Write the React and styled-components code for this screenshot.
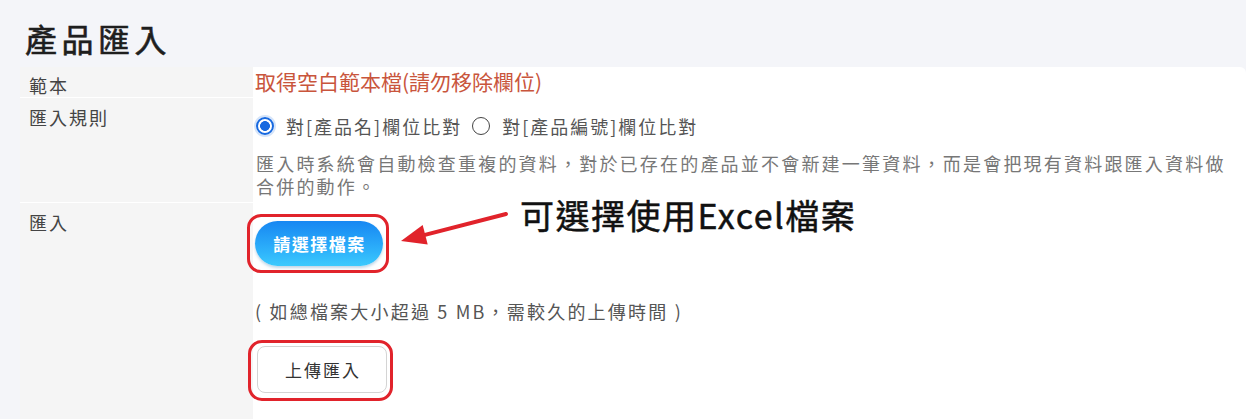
import React from "react";
import styled, { createGlobalStyle } from "styled-components";

const Global = createGlobalStyle`
  html, body { margin: 0; padding: 0; }
  body {
    background: #f4f5f9;
    font-family: "Noto Sans CJK TC", "Noto Sans", sans-serif;
    color: #444;
  }
  * { box-sizing: border-box; }
`;

const Page = styled.div`
  padding: 15px 0 0 20px;
  width: 1246px;
  height: 419px;
  overflow: hidden;
`;

const Title = styled.h1`
  margin: 0 0 6px;
  padding-left: 5px;
  font-size: 32px;
  line-height: 46px;
  font-weight: 400;
  letter-spacing: 4.5px;
  color: #1e1e1e;
  -webkit-text-stroke: 0.6px #1e1e1e;
`;

const Table = styled.div`
  display: grid;
  grid-template-columns: 233px 1fr;
  border-top-right-radius: 6px;
  overflow: hidden;
`;

const Label = styled.div`
  background: #f5f5f5;
  border-bottom: 1px solid #ffffff;
  padding: ${(p) => p.$top || 7}px 0 0 9px;
  font-size: 18px;
  line-height: 24px;
  letter-spacing: 2px;
  color: #444;
  min-height: ${(p) => p.$min || 0}px;
`;

const Cell = styled.div`
  position: relative;
  background: #ffffff;
  padding: ${(p) => p.$pad || "0 0 0 3px"};
`;

const TemplateLink = styled.a`
  display: block;
  font-size: 21px;
  line-height: 28px;
  color: #c9553c;
  text-decoration: none;
  margin-left: -1px;
`;

const RadioGroup = styled.div`
  display: flex;
  align-items: center;
  height: 28px;
  font-size: 18px;
  letter-spacing: 2px;
  color: #555;
`;

const RadioLabel = styled.label`
  display: flex;
  align-items: center;
  gap: 12px;
  margin-right: 10px;
  white-space: nowrap;
`;

const RadioDot = styled.span`
  width: 18px;
  height: 18px;
  border-radius: 50%;
  flex: none;
  border: ${(p) => (p.$checked ? "2px solid #1769e0" : "1.5px solid #444")};
  background: ${(p) =>
    p.$checked
      ? "radial-gradient(circle, #1769e0 0 4.6px, #fff 5.2px)"
      : "#fff"};
  box-shadow: ${(p) => (p.$checked ? "0 0 0 2px rgba(23,105,224,0.18)" : "none")};
`;

const Description = styled.p`
  margin: 12px 0 0;
  width: 985px;
  font-size: 18px;
  line-height: 23px;
  letter-spacing: 2.2px;
  color: #777;
`;

const Highlight = styled.div`
  position: relative;
  display: inline-block;
  margin-left: ${(p) => p.$left || 0}px;
  &::after {
    content: "";
    position: absolute;
    inset: ${(p) => p.$inset || "-7px -6px -7px -8px"};
    border: 3px solid #e1232b;
    border-radius: 14px;
    pointer-events: none;
  }
`;

const ChooseButton = styled.button`
  display: block;
  width: 128px;
  height: 45px;
  border: none;
  border-radius: 23px;
  background: linear-gradient(180deg, #1787f2 0%, #2fb4fb 70%, #3ccafd 100%);
  box-shadow: 0 2px 3px rgba(0, 90, 160, 0.25);
  color: #fff;
  font-family: inherit;
  font-size: 17px;
  font-weight: 700;
  letter-spacing: 1.5px;
  padding: 0 0 0 1px;
`;

const Note = styled.p`
  margin: 33px 0 0;
  font-size: 18px;
  line-height: 24px;
  letter-spacing: 2.2px;
  color: #555;
`;

const UploadButton = styled.button`
  display: block;
  width: 130px;
  height: 47px;
  border: 1px solid #d4d4d4;
  border-radius: 8px;
  background: #fff;
  color: #333;
  font-family: inherit;
  font-size: 17px;
  letter-spacing: 2px;
  padding: 0 0 0 2px;
`;

const UploadWrap = styled.div`
  margin-top: 23px;
`;

const Annotation = styled.div`
  position: absolute;
  left: 142px;
  top: -4px;
  display: flex;
  align-items: flex-start;
  pointer-events: none;
`;

const ArrowSvg = styled.svg`
  margin-top: 5px;
  flex: none;
`;

const AnnotationText = styled.span`
  margin-left: 5px;
  font-size: 34px;
  line-height: 32px;
  font-weight: 400;
  letter-spacing: 1.5px;
  color: #111;
  -webkit-text-stroke: 0.5px #111;
  white-space: nowrap;
`;

function Radio({ checked, children }) {
  return (
    <RadioLabel>
      <RadioDot $checked={checked} />
      {children}
    </RadioLabel>
  );
}

export default function App() {
  return (
    <>
      <Global />
      <Page>
        <Title>產品匯入</Title>
        <Table>
          <Label $top={6}>範本</Label>
          <Cell $pad="0 0 3px 3px">
            <TemplateLink href="#">取得空白範本檔(請勿移除欄位)</TemplateLink>
          </Cell>

          <Label>匯入規則</Label>
          <Cell $pad="14px 0 5px 3px">
            <RadioGroup>
              <Radio checked>對[產品名]欄位比對</Radio>
              <Radio>對[產品編號]欄位比對</Radio>
            </RadioGroup>
            <Description>
              匯入時系統會自動檢查重複的資料，對於已存在的產品並不會新建一筆資料，而是會把現有資料跟匯入資料做合併的動作。
            </Description>
          </Cell>

          <Label $min={220}>匯入</Label>
          <Cell $pad="18px 0 0 2px">
            <Highlight>
              <ChooseButton>請選擇檔案</ChooseButton>
            </Highlight>
            <Note>( 如總檔案大小超過 5 MB，需較久的上傳時間 )</Note>
            <UploadWrap>
              <Highlight $left={2} $inset="-6px -6px -8px -9px">
                <UploadButton>上傳匯入</UploadButton>
              </Highlight>
            </UploadWrap>
            <Annotation>
              <ArrowSvg width="120" height="45" viewBox="0 0 120 45">
                <line x1="111" y1="10" x2="28" y2="31.4" stroke="#e1232b" strokeWidth="4" strokeLinecap="round" />
                <polygon points="6,37 27.7,21.1 32.7,40.5" fill="#e1232b" />
              </ArrowSvg>
              <AnnotationText>可選擇使用Excel檔案</AnnotationText>
            </Annotation>
          </Cell>
        </Table>
      </Page>
    </>
  );
}
